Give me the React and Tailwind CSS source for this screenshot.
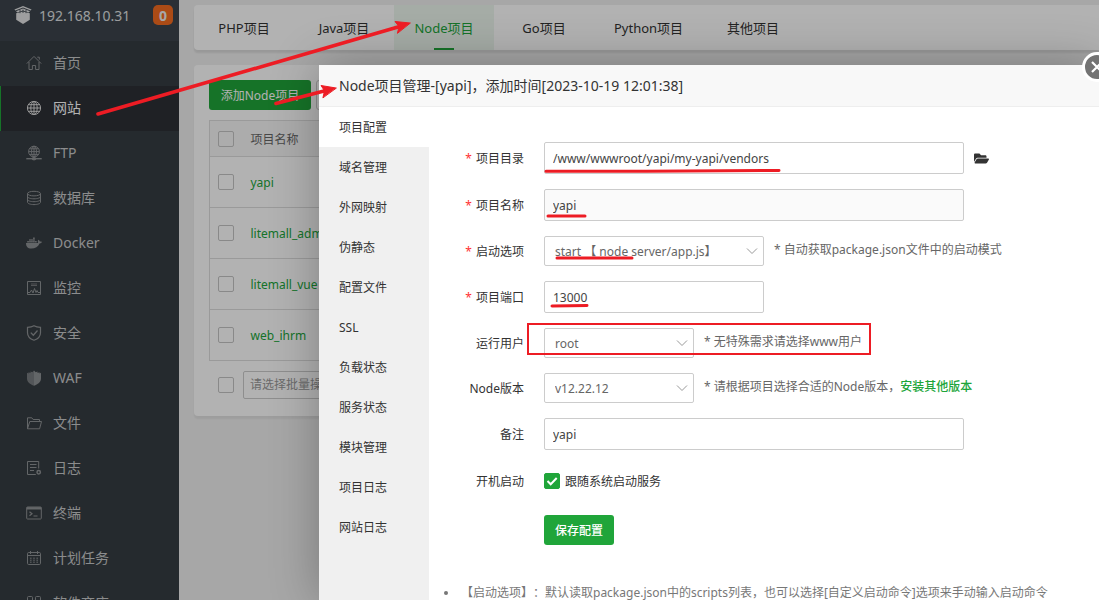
import React from "react";
import { FaDocker, FaFolderOpen } from "react-icons/fa";

const FONT = "font-['Noto_Sans','Noto_Sans_CJK_SC',sans-serif]";

function Line({ children, className = "" }) {
  return (
    <svg viewBox="0 0 16 16" fill="none" stroke="currentColor" strokeWidth="1" className={"h-4 w-4 shrink-0 " + className} aria-hidden="true">
      {children}
    </svg>
  );
}

const HomeIcon = () => (
  <Line>
    <path d="M.8 8.6 8 1.4l7.2 7.2M3 7v7.5h3.4v-4h3.2v4H13V7M11.3 2.2h2v2.4" />
  </Line>
);
const GlobeIcon = () => (
  <Line>
    <circle cx="8" cy="8" r="6.6" />
    <ellipse cx="8" cy="8" rx="3.2" ry="6.6" />
    <path d="M8 1.4v13.2M1.4 8h13.2M2.4 4.7h11.2M2.4 11.3h11.2" />
  </Line>
);
const FtpIcon = () => (
  <Line>
    <circle cx="8" cy="6.6" r="5.4" />
    <ellipse cx="8" cy="6.6" rx="2.5" ry="5.4" />
    <path d="M8 1.2V12M2.6 6.6h10.8M3.6 3.8h8.8M3.6 9.4h8.8" />
    <path d="M.3 13.7h15.4" strokeWidth="1.4" />
    <ellipse cx="8" cy="13.7" rx="2" ry="1.2" fill="currentColor" />
  </Line>
);
const DatabaseIcon = () => (
  <Line>
    <ellipse cx="8" cy="3.6" rx="6.5" ry="2.3" />
    <path d="M1.5 3.6v8.6c0 1.3 2.9 2.4 6.5 2.4s6.5-1.1 6.5-2.4V3.6M1.5 6.5c0 1.3 2.9 2.3 6.5 2.3s6.5-1 6.5-2.3M1.5 9.4c0 1.3 2.9 2.3 6.5 2.3s6.5-1 6.5-2.3" />
  </Line>
);
const MonitorIcon = () => (
  <Line>
    <path d="M1.5 1.5h13v13h-13z" />
    <path d="M5 4h6M5 5.500h6" opacity=".7" />
    <path d="M2 12.500h2l1.500-2.500L7 13l1.500-4.500 1.500 4 1-2 1 2h2" />
  </Line>
);
const SafeIcon = () => (
  <Line>
    <path strokeWidth="1.2" d="M8 .8c2 1.2 4.200 1.500 6.500 1.500v5.500c0 3.600-2.800 6.200-6.500 7.400C4.300 14 1.500 11.400 1.500 7.800V2.300C3.800 2.300 6 2 8 .8z" />
    <path strokeWidth="1.3" d="m4.800 7.600 2.500 2.600 4.200-4.700" />
  </Line>
);
const WafIcon = () => (
  <Line>
    <path stroke="none" fill="currentColor" opacity=".75" d="M8 .5v15.200C4.200 14.500 1 12 1 8.500V2.800l1.500.8V2.200l2 .8V1.500l1.800.7z" />
    <path stroke="none" fill="currentColor" d="M8 .5v15.200c3.800-1.200 7-3.700 7-7.200V2.800l-1.500.8V2.200l-2 .8V1.500l-1.800.7z" />
  </Line>
);
const FolderIcon = () => (
  <Line>
    <path d="M1.500 13.800v-11h4.300l1.300 1.700h6.400v2M1.500 13.800 3.800 6.500h11.700l-1.900 7.300z" />
  </Line>
);
const LogIcon = () => (
  <Line>
    <path d="M9.800 14.500H1.500v-13h11.200v7M4 4.500h6.500M4 7.500h6.500M4 10.500h4" />
    <circle cx="12.700" cy="12.200" r="1.700" strokeWidth="1.500" />
  </Line>
);
const TerminalIcon = () => (
  <Line>
    <rect x=".7" y="2" width="14.600" height="12" rx=".8" />
    <path d="M.7 3.300h14.600" strokeWidth="2.400" />
    <path d="m3.500 6.800 2.500 2-2.500 2M7.500 11h4" strokeWidth="1.200" />
  </Line>
);
const CalendarIcon = () => (
  <Line>
    <rect x="1.500" y="2.500" width="13" height="12" rx="1.200" />
    <path d="M1.500 5.500h13M4.500 1v3M11.500 1v3" />
    <path d="M4 8.200h8M4 10.200h8M4 12.200h8" strokeDasharray="1.600 1.600" />
  </Line>
);
const AppsIcon = () => (
  <Line>
    <rect x="1.500" y="1.500" width="5" height="5" rx="1" />
    <rect x="9.500" y="1.500" width="5" height="5" rx="1" />
    <rect x="1.500" y="9.500" width="5" height="5" rx="1" />
    <rect x="9.500" y="9.500" width="5" height="5" rx="1" />
  </Line>
);
const LogoIcon = () => (
  <svg viewBox="0 0 18 18" className="h-[18px] w-[18px] shrink-0 text-[#e2e3e4]" fill="currentColor" aria-hidden="true">
    <path d="M9 0 .4 3.600l1 1L9 1.600l7.600 3 1-1z" />
    <path d="M9 2.600 2 5.200l1.400 1.200L9 4.600l5.600 1.800L16 5.200z" />
    <path d="M2.200 7.200 9 5.600l6.800 1.600v6.600L9 18l-6.800-4.200z" />
    <path d="M6 3.800v3.400M9 3.600v3.400M12 3.800v3.400" stroke="#3d444c" strokeWidth=".8" />
  </svg>
);

const MENU = [
  ["首页", HomeIcon],
  ["网站", GlobeIcon],
  ["FTP", FtpIcon],
  ["数据库", DatabaseIcon],
  ["Docker", () => <FaDocker className="h-4 w-4 shrink-0" />],
  ["监控", MonitorIcon],
  ["安全", SafeIcon],
  ["WAF", WafIcon],
  ["文件", FolderIcon],
  ["日志", LogIcon],
  ["终端", TerminalIcon],
  ["计划任务", CalendarIcon],
  ["软件商店", AppsIcon],
];
const TABS = ["PHP项目", "Java项目", "Node项目", "Go项目", "Python项目", "其他项目"];
const PROJECTS = ["yapi", "litemall_admin", "litemall_vue", "web_ihrm"];
const SECTIONS = ["项目配置", "域名管理", "外网映射", "伪静态", "配置文件", "SSL", "负载状态", "服务状态", "模块管理", "项目日志", "网站日志"];

function Sidebar() {
  return (
    <aside className="w-[179px] shrink-0 overflow-hidden bg-[#363d42] text-[#c8c9ca]">
      <div className="flex h-[41px] items-center bg-[#3d444c] pr-[6px] pb-[11px] pl-[14px]">
        <LogoIcon />
        <span className="ml-[7px] flex-1 text-[14px] text-[#dfe0e2]">192.168.10.31</span>
        <span className="flex h-5 w-5 items-center justify-center rounded-[5px] bg-[#f56c20] text-[14px] font-bold text-[#f0f0f0]">0</span>
      </div>
      <nav>
        {MENU.map(([name, Icon]) => (
          <a
            key={name}
            href="#"
            className={
              "flex h-[45px] items-center gap-[11px] border-l pb-[2px] pl-[25px] text-[14px] " +
              (name === "网站" ? "border-[#20a53a] bg-[#2d3036] text-white" : "border-transparent")
            }
          >
            <span className={name === "网站" ? "text-[#dcdcdc]" : "text-[#8f9295]"}>
              <Icon />
            </span>
            {name}
          </a>
        ))}
      </nav>
    </aside>
  );
}

function Box({ label }) {
  return <input type="checkbox" aria-label={label} className="block h-4 w-4 appearance-none rounded-[2px] border border-[#c4c4c4] checked:bg-[#20a53a]" />;
}

function ProjectPage() {
  return (
    <main className="flex min-w-0 flex-1 flex-col gap-[15px] pt-[5px] pl-[15px]">
      <div className="flex h-[45px] rounded-l-[4px] bg-white text-[13px] text-[#333] shadow-[0_3px_2px_rgba(0,0,0,0.09)]" role="tablist">
        {TABS.map((t) => (
          <button
            key={t}
            role="tab"
            aria-selected={t === "Node项目"}
            className={
              "flex min-w-[100px] flex-col items-center justify-between px-5 " +
              (t === "Node项目" ? "bg-[#ecf6ee] text-[#20a53a]" : "")
            }
          >
            <span className="leading-[46px]">{t}</span>
            {t === "Node项目" && <span className="-mt-[3px] h-[2px] w-5 shrink-0 bg-[#20a53a]" />}
          </button>
        ))}
      </div>
      <section className="rounded-l-[4px] bg-white p-[15px] pb-[17px] text-[12px] shadow-[0_3px_2px_rgba(0,0,0,0.06)]">
        <div className="flex gap-[5px]">
          <button className="h-[30px] w-[102px] rounded-[3px] bg-[#20a53a] pt-[2px] text-[12px] whitespace-nowrap text-white">添加Node项目</button>
          <button aria-label="更多" className="h-[30px] w-20 rounded-[3px] border border-[#ccc]" />
        </div>
        <table className="mt-[10px] w-full border-collapse border border-[#ddd] text-left">
          <thead>
            <tr className="h-9 border-b border-[#ddd] bg-[#f6f6f6]">
              <th className="w-[41px] pl-2">
                <Box label="全选" />
              </th>
              <th className="pt-[2px] font-normal text-[#666]">项目名称</th>
            </tr>
          </thead>
          <tbody>
            {PROJECTS.map((p) => (
              <tr key={p} className="h-[51px] border-b border-[#ddd]">
                <td className="pl-2">
                  <Box label={p} />
                </td>
                <td className="pt-[2px]">
                  <a href="#" className="text-[#20a53a]">{p}</a>
                </td>
              </tr>
            ))}
          </tbody>
        </table>
        <div className="mt-[10px] flex items-center gap-[9px] pl-[9px]">
          <Box label="选择全部项目" />
          <select aria-label="批量操作" className="h-7 w-[150px] appearance-none rounded-[2px] border border-[#ccc] bg-white pl-[6px] text-[#999]">
            <option>请选择批量操作</option>
          </select>
        </div>
      </section>
    </main>
  );
}

function Row({ id, label, required, children }) {
  return (
    <div className="flex items-center gap-5">
      <label htmlFor={id} className="w-[95px] shrink-0 pt-[2px] text-right text-[#333]">
        {required && <span className="mr-1 text-[#f33]">*</span>}
        {label}
      </label>
      {children}
    </div>
  );
}

function Select({ id, value, className }) {
  return (
    <span className={"relative block shrink-0 " + className}>
      <select id={id} className="block h-[30px] w-full appearance-none rounded-[2px] border border-[#ccc] bg-white pt-[2px] pl-[10px] text-[#666]">
        <option>{value}</option>
      </select>
      <svg viewBox="0 0 12 12" className="pointer-events-none absolute top-[9px] right-[6px] h-3 w-3" fill="none" stroke="#999" aria-hidden="true">
        <path d="m1 3.500 5 5 5-5" />
      </svg>
    </span>
  );
}

const INPUT = "h-8 rounded-[2px] border border-[#ccc] pl-2 text-[#444] ";

function Dialog() {
  return (
    <div className="absolute inset-0 flex bg-black/30 pt-[65px] pl-[319px]">
      <div role="dialog" aria-label="Node项目管理" className="relative flex min-w-0 flex-1 flex-col rounded-tl-[2px] bg-white text-[12px] shadow-[1px_1px_50px_rgba(0,0,0,0.3)]">
        <h2 className="flex h-[42px] shrink-0 items-center border-b border-[#eee] bg-[#f8f8f8] pl-5 text-[14px] text-[#333] [text-spacing-trim:space-all]">
          Node项目管理-[yapi]，添加时间[2023-10-19 12:01:38]
        </h2>
        <button aria-label="关闭" className="absolute -top-[13px] -right-[13px] flex h-[30px] w-[30px] items-center justify-center rounded-full border-[3px] border-white bg-[#737373]">
          <svg viewBox="0 0 12 12" className="h-3 w-3" stroke="#fff" strokeWidth="2.200" aria-hidden="true">
            <path d="m1 1 10 10M11 1 1 11" />
          </svg>
        </button>
        <div className="flex min-h-0 flex-1">
          <nav className="w-[110px] shrink-0 bg-[#f0f0f0]">
            {SECTIONS.map((s, i) => (
              <a key={s} href="#" className={"flex h-10 items-center pt-[2px] pl-5 text-[#333] " + (i === 0 ? "bg-white" : "")}>
                {s}
              </a>
            ))}
          </nav>
          <div className="min-w-0 flex-1 overflow-hidden pt-[35px]">
            <form className="flex flex-col gap-[15px]" onSubmit={(e) => e.preventDefault()}>
              <Row id="dir" label="项目目录" required>
                <div className="flex items-center gap-[10px]">
                  <input id="dir" defaultValue="/www/wwwroot/yapi/my-yapi/vendors" className={INPUT + "w-[420px]"} />
                  <button type="button" aria-label="选择目录" className="text-[#333]">
                    <FaFolderOpen className="h-[15px] w-[15px]" />
                  </button>
                </div>
              </Row>
              <Row id="name" label="项目名称" required>
                <input id="name" defaultValue="yapi" readOnly className={INPUT + "w-[420px] bg-[#fafafa]"} />
              </Row>
              <Row id="start" label="启动选项" required>
                <div className="flex gap-[10px]">
                  <Select id="start" value="start 【 node server/app.js】" className="w-[220px]" />
                  <span className="h-[30px] leading-7 text-[#666]">* 自动获取package.json文件中的启动模式</span>
                </div>
              </Row>
              <Row id="port" label="项目端口" required>
                <input id="port" defaultValue="13000" className={INPUT + "w-[220px]"} />
              </Row>
              <Row id="user" label="运行用户">
                <div className="flex gap-[10px]">
                  <Select id="user" value="root" className="w-[150px]" />
                  <span className="h-[30px] leading-7 text-[#666]">* 无特殊需求请选择www用户</span>
                </div>
              </Row>
              <Row id="node" label="Node版本">
                <div className="flex gap-[10px]">
                  <Select id="node" value="v12.22.12" className="w-[150px]" />
                  <span className="h-[30px] leading-7 text-[#666]">
                    * 请根据项目选择合适的Node版本，
                    <a href="#" className="font-medium text-[#20a53a]">安装其他版本</a>
                  </span>
                </div>
              </Row>
              <Row id="note" label="备注">
                <input id="note" defaultValue="yapi" className={INPUT + "w-[420px]"} />
              </Row>
              <Row id="boot" label="开机启动">
                <div className="flex h-8 items-center gap-[5px]">
                  <span className="relative block h-4 w-4">
                    <input id="boot" type="checkbox" defaultChecked className="peer block h-4 w-4 appearance-none rounded-[2px] border border-[#ccc] checked:border-[#20a53a] checked:bg-[#20a53a]" />
                    <svg viewBox="0 0 16 16" className="pointer-events-none absolute inset-0 hidden h-4 w-4 peer-checked:block" fill="none" stroke="#fff" strokeWidth="2" aria-hidden="true">
                      <path d="m3.500 8 3.200 3.200 6-6.200" />
                    </svg>
                  </span>
                  <label htmlFor="boot" className="pt-[2px] text-[#333]">跟随系统启动服务</label>
                </div>
              </Row>
              <button type="submit" className="mt-[3px] ml-[115px] h-[30px] w-[70px] rounded-[3px] bg-[#20a53a] pt-[2px] font-medium text-white">
                保存配置
              </button>
            </form>
            <ul className="mt-[36px] text-[#777] [text-spacing-trim:space-all]">
              <li className="flex items-center whitespace-nowrap leading-6">
                <span className="mr-[13px] ml-[15px] h-1 w-1 rounded-full bg-[#777]" />
                【启动选项】：默认读取package.json中的scripts列表，也可以选择[自定义启动命令]选项来手动输入启动命令
              </li>
            </ul>
          </div>
        </div>
      </div>
    </div>
  );
}

function Marks() {
  return (
    <svg width="1099" height="600" viewBox="0 0 1099 600" className="pointer-events-none absolute top-0 left-0" fill="none" stroke="#ed1c24" strokeWidth="3" strokeLinecap="round" aria-hidden="true">
      <path d="M98 114 398 27M276 103.500 324 91" strokeWidth="3.600" />
      <path d="M410 23 395 21.500l4 5-1.500 6.500zM336 88 321 85.500l3.500 5.300-1.500 6.700z" fill="#ed1c24" strokeWidth="1" strokeLinejoin="round" />
      <path d="M546 171.300h100l133-.8M548 216h37M557 258h75M552 306l35-.4" />
      <path d="M528 324h342v30H528z" strokeWidth="2" strokeLinecap="square" />
    </svg>
  );
}

export default function App() {
  return (
    <div className={"relative flex h-screen overflow-hidden bg-[#f0f0f0] " + FONT}>
      <Sidebar />
      <ProjectPage />
      <Dialog />
      <Marks />
    </div>
  );
}
